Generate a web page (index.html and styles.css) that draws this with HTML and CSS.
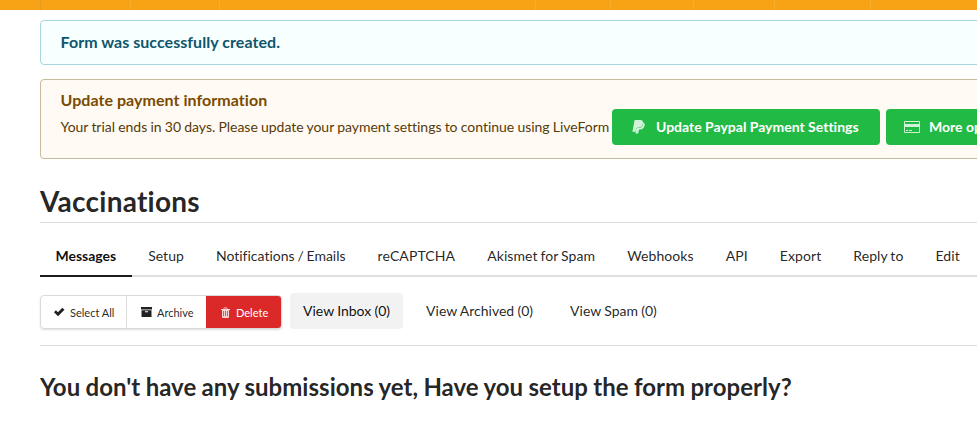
FILE: index.html
```html
<!DOCTYPE html>
<html lang="en">
<head>
<meta charset="utf-8">
<title>Vaccinations</title>
<link rel="stylesheet" href="styles.css">
</head>
<body>
<div class="topbar"><i class="s1"></i><i class="s2"></i><i class="s3"></i><i class="s4"></i><i class="s5"></i><i class="s6"></i><i class="s7"></i><i class="s8"></i></div>
<main class="container">
  <section class="message info"><h2>Form was successfully created.</h2></section>
  <section class="message warning">
    <h2>Update payment information</h2>
    <div class="notice">
      <span class="copy">Your trial ends in 30 days. Please update your payment settings to continue using LiveForm</span>
      <a class="button paypal">
        <svg width="14" height="16" viewBox="0 0 14 16"><path d="M2.600 1h5.700c2 0 3 1 2.700 3.100C10.700 7.200 8.800 8.700 6.300 8.700H5.200c-.6 0-.8.3-.9.9L3.600 12.700H.4Z"/><path d="M11.200 3.600c1.400.7 1.700 1.500 1.500 2.700-.5 2.700-2.100 4.200-4.500 4.200h-.6c-.5 0-.7.3-.8.8L6.200 14.500H3.400l1-4.700c.1-.5.300-.7.8-.7h1.200c2.900 0 4.400-1.900 4.800-5.500Z"/></svg>
        <span>Update Paypal Payment Settings</span>
      </a>
      <a class="button more">
        <svg width="16" height="14" viewBox="0 0 16 14"><path fill-rule="evenodd" d="M1 1h14a1 1 0 0 1 1 1v10a1 1 0 0 1-1 1H1a1 1 0 0 1-1-1V2a1 1 0 0 1 1-1ZM1 2v2h14V2ZM1 7v5h14V7Z"/><path d="M2 10h2v1H2ZM5 10h3v1H5Z"/></svg>
        <span>More options</span>
      </a>
    </div>
  </section>
  <h1>Vaccinations</h1>
  <nav class="tabs">
    <a class="active">Messages</a><a>Setup</a><a>Notifications / Emails</a><a>reCAPTCHA</a><a>Akismet for Spam</a><a>Webhooks</a><a>API</a><a>Export</a><a>Reply to</a><a>Edit</a>
  </nav>
  <div class="toolbar">
    <div class="actions">
      <a class="select"><svg width="11" height="10" viewBox="0 0 11 10"><path d="M0 5.300 1.900 3.200 4 5.300 8.300.7l2.200 2.100L4 9.300Z"/></svg><span>Select All</span></a>
      <a class="archive"><svg width="11" height="10" viewBox="0 0 11 10"><path fill-rule="evenodd" d="M0 0h11v2.500H0ZM.5 3.300h10V10H.5ZM4 4.300v1h3v-1Z"/></svg><span>Archive</span></a>
      <a class="delete"><svg width="9" height="11" viewBox="0 0 9 11"><path fill-rule="evenodd" d="M3 .5h3L6.600 2H9v1H8v7q0 1-1 1H2q-1 0-1-1V3H0V2h2.400ZM3.500 1.300 3.200 2h2.600l-.3-.7ZM2.300 4v5.300H3V4ZM4.150 4v5.300h.7V4ZM6 4v5.300h.7V4Z"/></svg><span>Delete</span></a>
    </div>
    <nav class="views"><a class="active">View Inbox (0)</a><a>View Archived (0)</a><a>View Spam (0)</a></nav>
  </div>
  <h3>You don't have any submissions yet, Have you setup the form properly?</h3>
</main>
</body>
</html>
```

FILE: styles.css
```css
* { box-sizing: border-box; }
body {
  margin: 0;
  overflow: hidden;
  background: #fff;
  color: rgba(0, 0, 0, .87);
  font: 14px/20px Lato, sans-serif;
  font-variant-ligatures: none;
}
h1, h2, h3 { margin: 0; font-weight: 700; }
svg { display: block; flex: none; fill: currentColor; }
.topbar {
  display: grid;
  grid-template-columns: 41px 90px 89px 316px 75px 83px 81px 96px 106px;
  height: 10px;
  background: #f8a316;
}
.topbar i { border-right: 1px solid #f9ad2f; }
.topbar .s1 { border-color: #e69a1e; }
.container { width: 1127px; margin: 10px 0 0 40px; }
.message { border: 1px solid; border-radius: 4px; padding: 0 19.500px; }
.message h2 { font-size: 16px; line-height: 20px; letter-spacing: .05px; }
.info {
  height: 45px;
  padding-top: 11px;
  background: #f8ffff;
  border-color: #a9d5de;
  color: #0e566c;
}
.warning {
  height: 80px;
  margin-top: 14px;
  padding-top: 10px;
  background: #fffaf3;
  border-color: #c9ba9b;
  color: #573a08;
}
.warning h2 { color: #794b02; }
.notice { display: flex; align-items: center; height: 36px; margin-top: -1px; white-space: nowrap; }
.copy { flex: none; width: 551.500px; letter-spacing: -.03px; word-spacing: -.3px; }
.button {
  display: flex;
  flex: none;
  align-items: center;
  height: 36px;
  border-radius: 4px;
  background: #21ba45;
  color: #fff;
  font-weight: 700;
}
.button svg { opacity: .8; }
.paypal { width: 268px; margin-right: 6px; padding-left: 20px; }
.paypal svg { margin-right: 10px; }
.more { width: 143px; padding-left: 18px; }
.more svg { margin-right: 9px; }
h1 {
  height: 43px;
  margin-top: 21px;
  padding-top: 3px;
  border-bottom: 1px solid #dcddde;
  font-size: 28px;
  line-height: 36px;
  letter-spacing: .25px;
}
.tabs {
  display: flex;
  height: 40px;
  margin-top: 14px;
  border-bottom: 2px solid #dededf;
  white-space: nowrap;
  letter-spacing: .04px;
  word-spacing: -.8px;
}
.tabs a { height: 40px; padding: 9px 16px 0; border-bottom: 2px solid transparent; }
.tabs a:nth-child(3) { letter-spacing: 0; }
.tabs a:nth-child(n+4) { letter-spacing: .09px; }
.tabs .active { padding-left: 15.500px; border-color: #1b1c1d; color: rgba(0, 0, 0, .95); font-weight: 700; letter-spacing: -.02px; }
.toolbar {
  display: flex;
  height: 69px;
  padding-top: 16px;
  border-bottom: 1px solid #dededf;
  white-space: nowrap;
}
.actions {
  display: flex;
  width: 242px;
  height: 34px;
  margin: 2px 8px 0 0;
  overflow: hidden;
  border: 1px solid #d9dadb;
  border-radius: 4px;
  box-shadow: 0 1px 2px rgba(34, 36, 38, .15);
  font-size: 11px;
  line-height: 22px;
}
.actions a { display: flex; align-items: center; gap: 5px; }
.actions span { padding-top: 1px; }
.select { width: 86px; padding-left: 13px; border-right: 1px solid #dededf; }
.archive { width: 79px; padding-left: 14px; }
.delete { flex: 1; margin: -1px -1px -1px 0; padding-left: 15px; background: #db2828; color: #fff; }
.delete svg { margin-right: 1px; opacity: .8; }
.views { display: flex; height: 36px; letter-spacing: 0; word-spacing: -.3px; }
.views a { margin-right: 11px; padding: 8px 13px; border-radius: 4px; }
.views .active { margin-right: 10px; background: #f2f2f2; color: rgba(0, 0, 0, .95); }
h3 { margin-top: 26px; font-size: 24px; line-height: 30px; letter-spacing: .03px; word-spacing: -.55px; white-space: nowrap; }
```
